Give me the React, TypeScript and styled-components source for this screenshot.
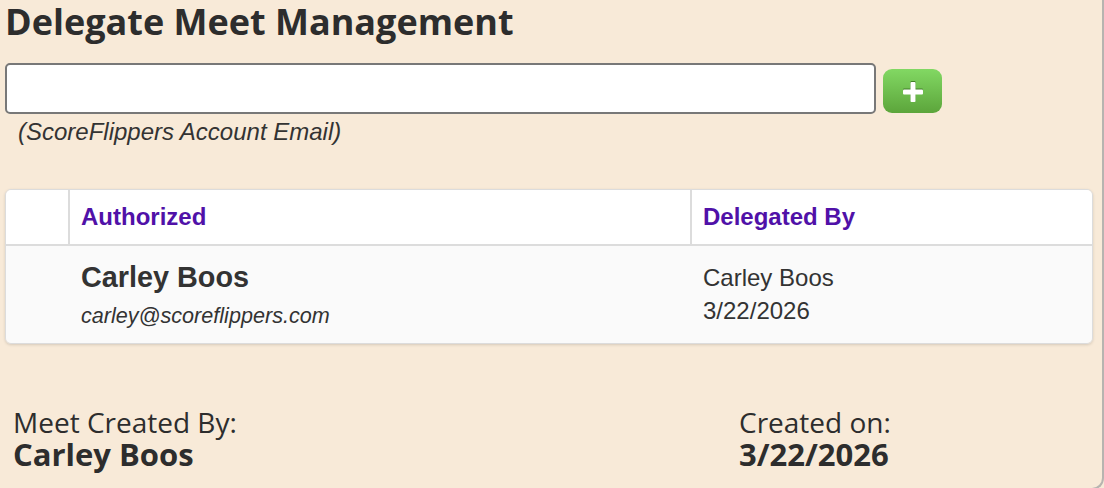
import styled, { createGlobalStyle } from 'styled-components';

const GlobalStyle = createGlobalStyle`
  html, body {
    margin: 0;
    padding: 0;
    background: #f8ead8;
    overflow: hidden;
  }
  * {
    box-sizing: border-box;
  }
`;

type delegate = {
  name: string;
  email: string;
  delegatedBy: string;
  date: string;
};

const delegates: delegate[] = [
  {
    name: 'Carley Boos',
    email: 'carley@scoreflippers.com',
    delegatedBy: 'Carley Boos',
    date: '3/22/2026',
  },
];

function PlusIcon() {
  return (
    <svg width='20' height='21' viewBox='0 0 20 21'>
      <g fill='#3f7f26'>
        <rect x='7.5' y='0' width='5' height='20' rx='1' />
        <rect x='0' y='7.5' width='20' height='5' rx='1' />
      </g>
      <g fill='#ffffff'>
        <rect x='7.5' y='1' width='5' height='20' rx='1' />
        <rect x='0' y='8.5' width='20' height='5' rx='1' />
      </g>
    </svg>
  );
}

export default function App() {
  return (
    <>
      <GlobalStyle />
      <Panel>
        <Title>Delegate Meet Management</Title>
        <AddRow>
          <EmailInput type='email' />
          <AddButton type='button' aria-label='Add delegate'>
            <PlusIcon />
          </AddButton>
        </AddRow>
        <Hint>(ScoreFlippers Account Email)</Hint>

        <Table>
          <HeaderRow>
            <HeadCell />
            <HeadCell>Authorized</HeadCell>
            <HeadCell $last>Delegated By</HeadCell>
          </HeaderRow>
          {delegates.map((d) => (
            <BodyRow key={d.email}>
              <BodyCell />
              <BodyCell>
                <DelegateName>{d.name}</DelegateName>
                <DelegateEmail>{d.email}</DelegateEmail>
              </BodyCell>
              <BodyCell>
                <PlainLine>{d.delegatedBy}</PlainLine>
                <PlainLine>{d.date}</PlainLine>
              </BodyCell>
            </BodyRow>
          ))}
        </Table>

        <Footer>
          <FooterBlock>
            <FooterLabel>Meet Created By:</FooterLabel>
            <FooterValue>Carley Boos</FooterValue>
          </FooterBlock>
          <FooterBlock>
            <FooterLabel>Created on:</FooterLabel>
            <FooterValue>3/22/2026</FooterValue>
          </FooterBlock>
        </Footer>
      </Panel>
    </>
  );
}

const Panel = styled.div`
  width: 1104px;
  height: 490px;
  padding: 0 9px 0 5px;
  background: #f8ead8;
  border-right: 2px solid #b7b4b0;
  border-bottom: 2px solid #b7b4b0;
  border-bottom-right-radius: 12px;
  color: #2d2d2d;
  display: flex;
  flex-direction: column;
`;

const Title = styled.h1`
  margin: 2px 0 0;
  font-family: 'Open Sans', sans-serif;
  font-size: 36px;
  font-weight: 700;
  line-height: 40px;
  color: #2d2d2d;
`;

const AddRow = styled.div`
  display: flex;
  align-items: flex-start;
  gap: 7px;
  margin-top: 21px;
`;

const EmailInput = styled.input`
  width: 871px;
  height: 51px;
  border: 2px solid #787878;
  border-radius: 5px;
  background: #ffffff;
  outline: none;
`;

const AddButton = styled.button`
  margin-top: 6px;
  width: 59px;
  height: 44px;
  border: none;
  border-radius: 9px;
  background: linear-gradient(#82d863, #5ca53b);
  display: flex;
  align-items: center;
  justify-content: center;
  padding: 0;
  cursor: pointer;
`;

const Hint = styled.div`
  margin: 5px 0 0 13px;
  font-family: 'Liberation Sans', Arial, sans-serif;
  font-size: 24px;
  line-height: 26px;
  font-style: italic;
  color: #333333;
`;

const Table = styled.div`
  margin-top: 44px;
  width: 1088px;
  border: 1px solid #dcdcdc;
  border-radius: 6px;
  overflow: hidden;
  box-shadow: 0 1px 3px rgba(0, 0, 0, 0.14);
  font-family: 'Liberation Sans', Arial, sans-serif;
`;

const HeaderRow = styled.div`
  display: grid;
  grid-template-columns: 64px 622px 1fr;
  background: #ffffff;
  border-bottom: 2px solid #dcdcdc;
`;

const HeadCell = styled.div<{ $last?: boolean }>`
  height: 54px;
  padding: 13px 11px 0;
  border-right: ${(p) => (p.$last ? 'none' : '2px solid #dcdcdc')};
  font-size: 24px;
  font-weight: 700;
  color: #5011a8;
`;

const BodyRow = styled.div`
  display: grid;
  grid-template-columns: 64px 622px 1fr;
  background: #fafafa;
`;

const BodyCell = styled.div`
  padding: 15px 11px 14px;
`;

const DelegateName = styled.div`
  font-size: 28.8px;
  font-weight: 700;
  color: #333333;
`;

const DelegateEmail = styled.div`
  margin-top: 9px;
  font-size: 21.6px;
  font-style: italic;
  color: #333333;
`;

const PlainLine = styled.div`
  font-size: 24px;
  line-height: 33px;
  color: #333333;
`;

const Footer = styled.div`
  display: grid;
  grid-template-columns: 726px 1fr;
  margin-top: 62px;
  padding-left: 8px;
  font-family: 'Open Sans', sans-serif;
  color: #2d2d2d;
`;

const FooterBlock = styled.div`
  display: flex;
  flex-direction: column;
`;

const FooterLabel = styled.div`
  font-size: 28px;
  line-height: 32px;
`;

const FooterValue = styled.div`
  font-size: 31px;
  font-weight: 700;
  line-height: 32px;
`;
